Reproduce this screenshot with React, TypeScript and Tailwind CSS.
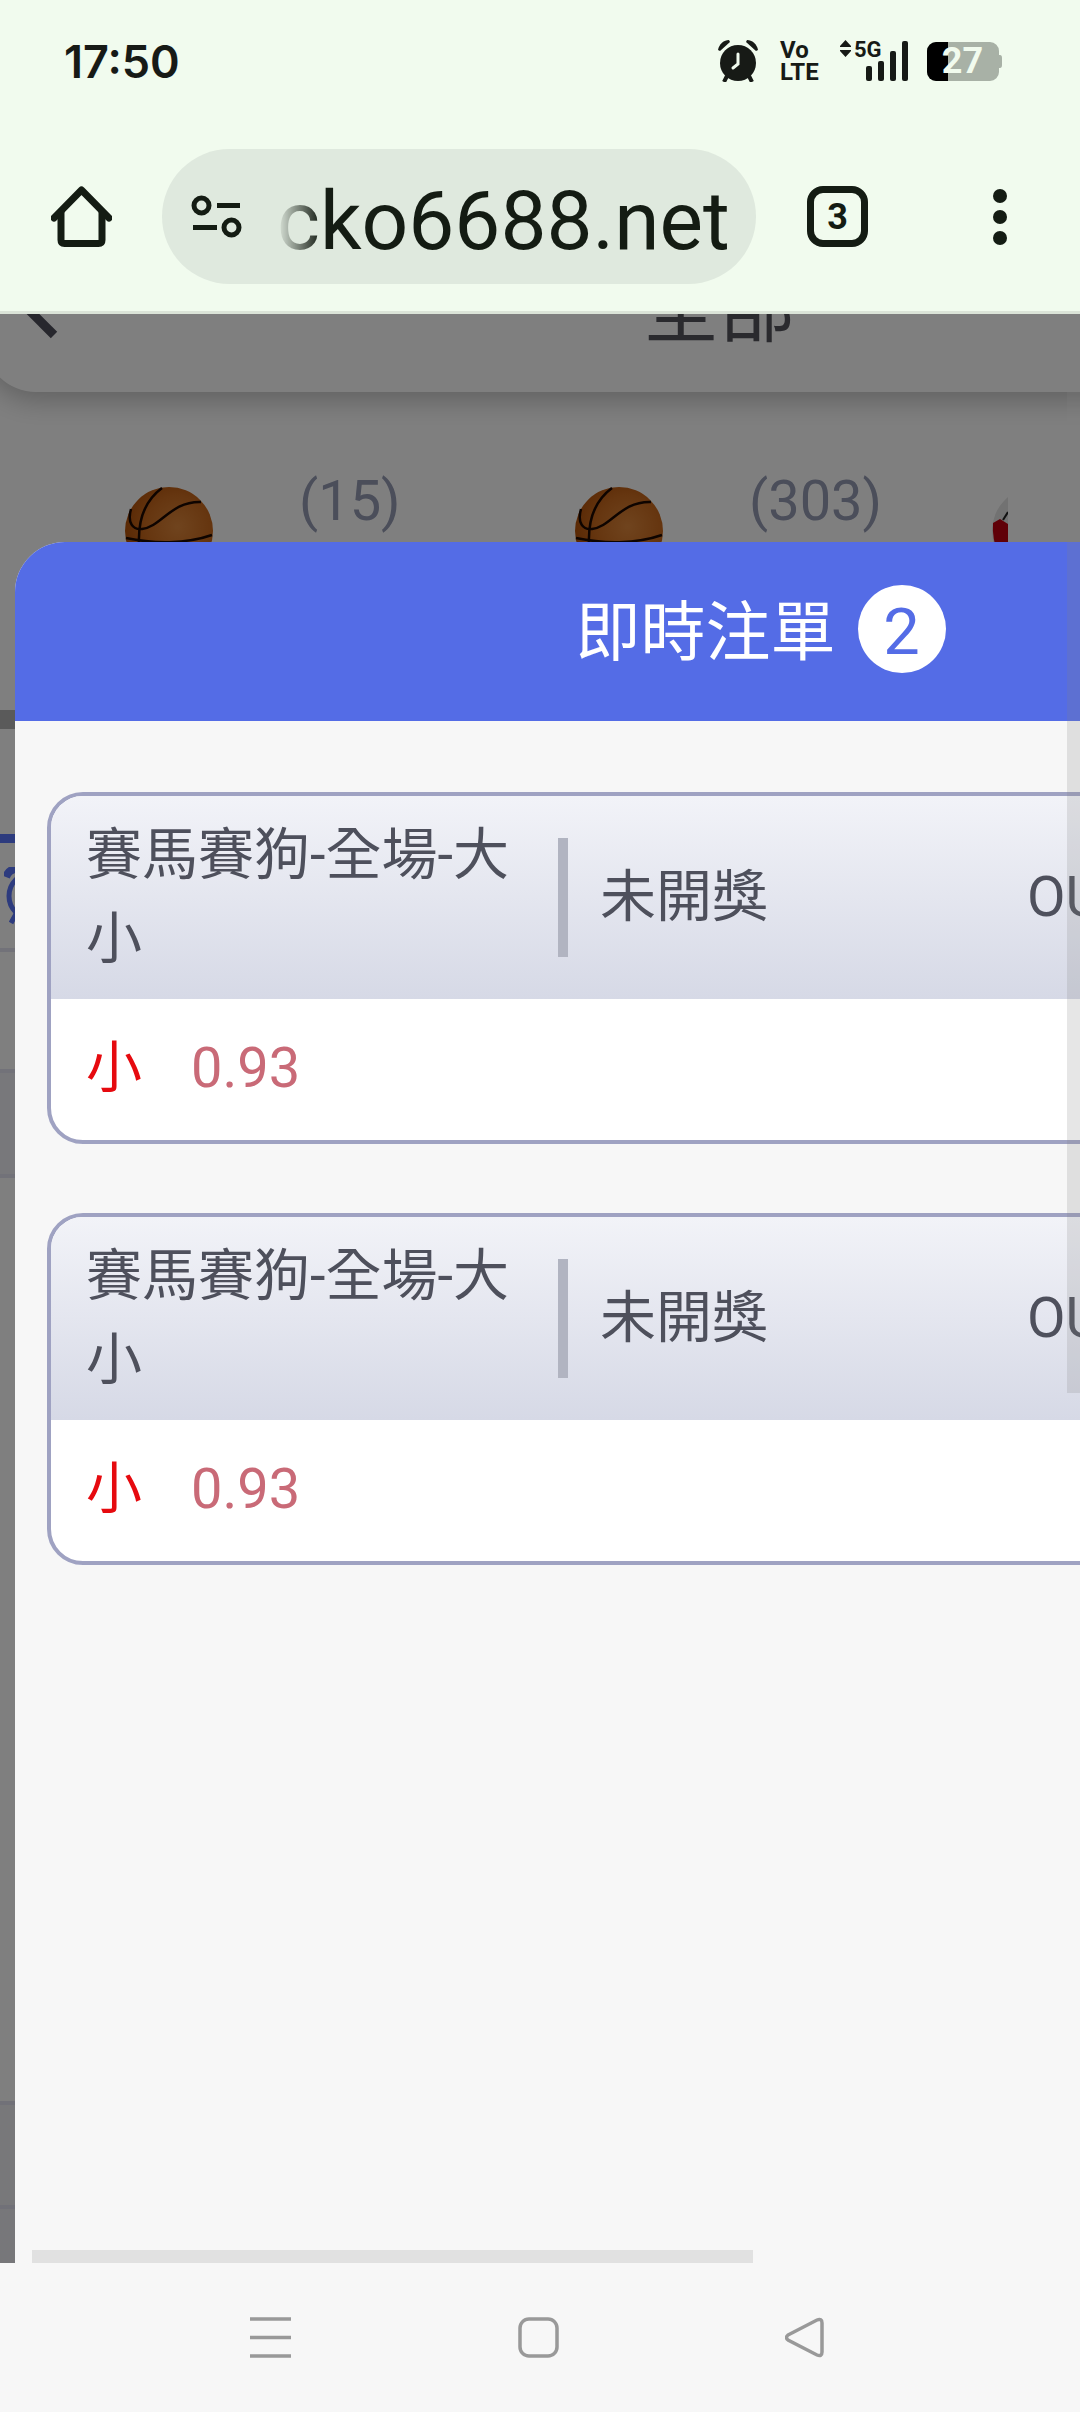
import type { ReactNode } from "react";

interface Bet {
  id: number;
  title: string;
  status: string;
  orderNo: string;
  pick: string;
  odds: string;
}

const bets: Bet[] = [
  { id: 1, title: "賽馬賽狗-全場-大小", status: "未開獎", orderNo: "OU", pick: "小", odds: "0.93" },
  { id: 2, title: "賽馬賽狗-全場-大小", status: "未開獎", orderNo: "OU", pick: "小", odds: "0.93" },
];

const AlarmIcon = () => (
  <svg width="40" height="42" viewBox="0 0 40 42" fill="#171a16">
    <circle cx="20" cy="23" r="18" />
    <path d="M0 10C1 4 6 0 11 0l1 2L2 11Z" />
    <path d="M40 10C39 4 34 0 29 0l-1 2 10 9Z" />
    <path d="M9 36 6 42M31 36l3 6" stroke="#171a16" strokeWidth="4" />
    <path d="M20 14v10l-5 4" fill="none" stroke="#f1fbee" strokeWidth="3" strokeLinecap="round" />
  </svg>
);

const Battery = () => (
  <div className="relative flex h-[39px] w-[75px] items-center">
    <svg className="absolute inset-0" width="75" height="39" viewBox="0 0 75 39">
      <path
        d="M9 0h54a9 9 0 0 1 9 9v4h1q2 0 2 3v7q0 3-2 3h-1v4a9 9 0 0 1-9 9H9a9 9 0 0 1-9-9V9a9 9 0 0 1 9-9Z"
        fill="#a8b1a6"
      />
      <path d="M9 0h12v39H9a9 9 0 0 1-9-9V9a9 9 0 0 1 9-9Z" fill="#000" />
    </svg>
    <span className="relative w-full pr-1 text-center text-[36px] leading-none font-bold text-[#f1fbee]">
      27
    </span>
  </div>
);

const StatusBar = () => (
  <div className="flex h-[122px] items-center justify-between pr-[78px] pl-16 text-[#171a16]">
    <span className="font-[Inter,sans-serif] text-[45px] leading-none font-semibold">17:50</span>
    <div className="flex items-center">
      <AlarmIcon />
      <div className="ml-[22px] flex w-[37px] flex-col text-[24px] leading-[22px] font-bold">
        <span>Vo</span>
        <span>LTE</span>
      </div>
      <div className="relative ml-[23px] h-[42px] w-[68px]">
        <svg width="68" height="42" viewBox="0 0 68 42" fill="#171a16">
          <path d="M0 6 5.500 0 11 6v1H0ZM0 10v1l5.500 6 5.500-6v-1Z" />
          <rect x="26" y="26" width="6" height="15" rx="2" />
          <rect x="38" y="21" width="6" height="20" rx="2" />
          <rect x="50" y="11" width="6" height="30" rx="2" />
          <rect x="62" y="1" width="6" height="40" rx="2" />
        </svg>
        <span className="absolute top-0 left-[14px] text-[22px] leading-[20px] font-bold">5G</span>
      </div>
      <div className="ml-[19px]">
        <Battery />
      </div>
    </div>
  </div>
);

const BrowserBar = () => (
  <div className="flex h-[189px] items-center pr-[50px] pl-[51px] text-[#141c13]">
    <button type="button" aria-label="Home">
      <svg width="61" height="61" viewBox="0 0 61 61" fill="none" stroke="currentColor">
        <path d="M3 32 30.500 4 58 32" strokeWidth="7" strokeLinejoin="round" strokeLinecap="round" />
        <path d="M10 25v29q0 3.500 3.500 3.500h34q3.500 0 3.500-3.500V25" strokeWidth="7" />
      </svg>
    </button>
    <div className="ml-[50px] flex h-[135px] min-w-0 flex-1 items-center rounded-full bg-[#dfe9de] pl-[29px]">
      <svg className="shrink-0" width="51" height="43" viewBox="0 0 51 43" fill="none" stroke="currentColor" strokeWidth="5">
        <circle cx="10.500" cy="10.500" r="7.500" />
        <path d="M26 10.500h23M2 32.500h24" />
        <circle cx="40.500" cy="32.500" r="7.500" />
      </svg>
      <input
        type="text"
        aria-label="Address"
        readOnly
        value="cko6688.net"
        className="ml-[35px] h-[114px] w-0 flex-1 bg-transparent pt-2 text-[82px] leading-[106px] outline-none [mask-image:linear-gradient(to_right,transparent,black_44px)]"
      />
    </div>
    <button
      type="button"
      aria-label="Tabs"
      className="ml-[51px] flex size-[61px] items-center justify-center rounded-2xl border-[7px] border-[#141c13] text-[36px] leading-none font-bold"
    >
      3
    </button>
    <button type="button" aria-label="Menu" className="ml-[101px] flex w-[61px] flex-col items-center gap-[7px]">
      <span className="size-[14px] rounded-full bg-[#141c13]" />
      <span className="size-[14px] rounded-full bg-[#141c13]" />
      <span className="size-[14px] rounded-full bg-[#141c13]" />
    </button>
  </div>
);

const Basketball = () => (
  <svg className="shrink-0" width="88" height="88" viewBox="0 0 88 88">
    <defs>
      <radialGradient id="ball" cx="0.6" cy="0.45" r="0.6">
        <stop offset="0" stopColor="#e0883c" />
        <stop offset="0.6" stopColor="#cc6c20" />
        <stop offset="1" stopColor="#b4520a" />
      </radialGradient>
    </defs>
    <circle cx="44" cy="44" r="44" fill="url(#ball)" />
    <g fill="none" stroke="#1c0800" strokeWidth="2.500">
      <path d="M37 1C22 12 13 30 14 56" />
      <path d="M6 22C2 36 8 43 17 42 36 40 46 14 76 15" />
      <path d="M1 51c28 6 60 6 86-3" />
    </g>
  </svg>
);

const SoccerBall = () => (
  <svg className="shrink-0" width="88" height="88" viewBox="0 0 88 88">
    <circle cx="44" cy="44" r="44" fill="#e4e4e4" />
    <path d="M1 36 8 32l8 5v40L6 66Q0 52 1 36Z" fill="#c00010" />
    <path d="m11 33 5-8" stroke="#222" strokeWidth="2" />
  </svg>
);

/* Page behind the bet slip */
const Lobby = () => (
  <div className="flex flex-1 flex-col bg-white">
    <div className="relative z-10 -mr-12 -ml-4 flex h-[78px] items-end rounded-bl-[52px] bg-white pl-[31px] shadow-[0_8px_28px_rgba(0,0,0,0.25)]">
      <button type="button" aria-label="返回" className="h-full">
        <svg width="45" height="78" viewBox="0 0 45 78" fill="none" stroke="#4e4e5a" strokeWidth="9">
          <path d="M14-4 39 21" />
        </svg>
      </button>
      <div className="flex h-full flex-1 items-end overflow-hidden pb-[44px] pl-[583px]">
        <h1 className="text-[76px] leading-[76px] whitespace-nowrap text-[#55555c]">全部</h1>
      </div>
    </div>
    <div className="flex h-[318px] items-start pt-[76px] pl-[125px] text-[56px] leading-[66px] text-[#969cb4]">
      <div className="flex w-[450px] shrink-0 gap-[86px]">
        <div className="pt-[19px]">
          <Basketball />
        </div>
        <span>(15)</span>
      </div>
      <div className="flex w-[417px] shrink-0 gap-[86px]">
        <div className="pt-[19px]">
          <Basketball />
        </div>
        <span>(303)</span>
      </div>
      <div className="w-4 overflow-hidden pt-[19px]">
        <SoccerBall />
      </div>
    </div>
    <div className="h-[19px] bg-[#b4b4b4]" />
    <div className="h-[105px]" />
    <div className="h-[9px] bg-[#5a76fc]" />
    <div className="h-[105px] pt-6 pl-1">
      <svg width="56" height="58" viewBox="0 0 56 58" fill="none" stroke="#5a76fc" strokeWidth="5">
        <circle cx="28" cy="29" r="23" />
        <path d="M2 10Q5 2 13 2M54 10Q51 2 43 2" strokeWidth="8" />
        <path d="m12 47-5 9M44 47l5 9" />
      </svg>
    </div>
    <div className="h-[121px] border-t-4 border-[#e4e5f2]" />
    <div className="h-[109px] border-y-4 border-[#e4e5f2] bg-[#f0f1f6]" />
    <div className="flex-1" />
    <div className="h-[104px] border-t-4 border-[#e2e3f0] bg-[#f0f0f5]" />
    <div className="h-[58px] border-t-4 border-[#e2e3f0] bg-[#eeeff4]" />
  </div>
);

const BetCard = ({ bet }: { bet: Bet }) => (
  <article className="overflow-hidden rounded-[36px] border-4 border-[#9fa2c2] bg-white text-[56px] leading-[84px]">
    <div className="flex items-center bg-linear-to-b from-[#f2f3f8] to-[#d6d9e6] pt-[17px] pb-[18px] text-[#4e505c]">
      <div className="w-[507px] shrink-0 px-[35px]">{bet.title}</div>
      <div className="h-[119px] w-[10px] shrink-0 bg-[#b1b4c1]" />
      <div className="w-[459px] shrink-0 pl-8">{bet.status}</div>
      <div>{bet.orderNo}</div>
    </div>
    <div className="flex gap-[49px] px-[35px] pt-[27px] pb-[30px]">
      <span className="text-[#e60a0f]">{bet.pick}</span>
      <span className="text-[#c96a77]">{bet.odds}</span>
    </div>
  </article>
);

const BetSlip = () => (
  <section className="absolute top-[228px] right-0 bottom-0 left-[15px] z-20 overflow-hidden rounded-tl-[50px] bg-[#f7f7f7]">
    <div className="w-[140%]">
      <header className="flex h-[179px] items-center justify-center gap-[22px] bg-[#546ce6] text-[65px] leading-none text-white">
        <h2 className="pt-1">即時注單</h2>
        <span className="mb-1.5 flex size-[88px] items-center justify-center rounded-full bg-white pt-2 text-[#546ce6]">
          {bets.length}
        </span>
      </header>
      <div className="flex flex-col gap-[69px] px-8 pt-[71px]">
        {bets.map((bet) => (
          <BetCard key={bet.id} bet={bet} />
        ))}
      </div>
    </div>
    {/* Horizontal scroll thumb */}
    <div className="absolute bottom-0 left-[17px] h-[13px] w-[721px] bg-[#e1e1e1]" />
  </section>
);

const NavButton = ({ label, children }: { label: string; children: ReactNode }) => (
  <button type="button" aria-label={label}>
    <svg width="41" height="41" viewBox="0 0 41 41" fill="none" stroke="#999" strokeWidth="3.500">
      {children}
    </svg>
  </button>
);

const App = () => {
  return (
    <div className="flex min-h-screen flex-col overflow-hidden bg-[#f7f7f7] font-[Roboto,'Noto_Sans_CJK_TC',sans-serif]">
      <div className="border-b-[3px] border-[#dbe4d8] bg-[#f1fbee]">
        <StatusBar />
        <BrowserBar />
      </div>

      <main className="relative flex flex-1 flex-col overflow-hidden">
        <Lobby />
        <div className="absolute inset-0 z-10 bg-black/50" />
        <BetSlip />
        {/* Vertical scroll thumb */}
        <div className="absolute top-[46px] right-0 z-30 h-[1033px] w-[13px] bg-[#808080]/20" />
      </main>

      <nav className="flex h-[149px] items-center justify-between pr-[254px] pl-[250px]">
        <NavButton label="Recents">
          <path d="M0 2h41M0 20.500h41M0 39h41" />
        </NavButton>
        <NavButton label="Home">
          <rect x="2" y="2" width="37" height="37" rx="9" />
        </NavButton>
        <NavButton label="Back">
          <path d="M3 18 32 3q5-2 5 3v29q0 5-5 3L3 23q-3-2.500 0-5Z" />
        </NavButton>
      </nav>
    </div>
  );
};

export default App;
